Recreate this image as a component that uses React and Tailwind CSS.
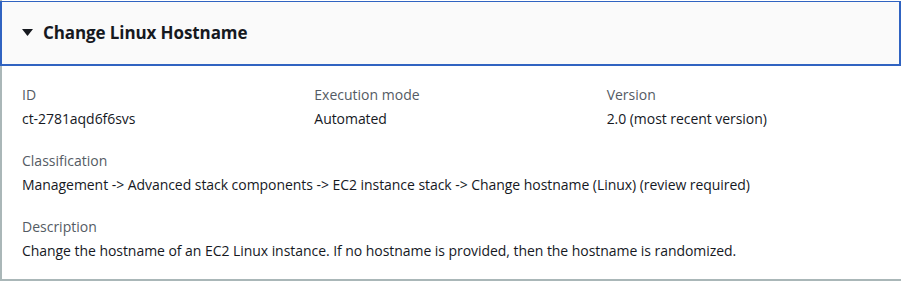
const FONT = "font-['Open_Sans',_'Noto_Sans',_sans-serif]";

const fields = [
  { label: "ID", value: "ct-2781aqd6f6svs" },
  { label: "Execution mode", value: "Automated" },
  { label: "Version", value: "2.0 (most recent version)" },
];

function Field({ label, value }) {
  return (
    <div className="flex flex-col">
      <div className="text-[14px] leading-[22px] text-[#545b64]">{label}</div>
      <div className="text-[14px] leading-[22px] text-[#16191f] mt-[2px] tracking-[-0.05px]">{value}</div>
    </div>
  );
}

export default function App() {
  return (
    <div className={`${FONT} w-[901px] h-[282px] bg-white`}>
      <div className="h-[281px] border-l-2 border-b-2 border-[#aab7b8] flex flex-col">
        {/* Header */}
        <div className="h-[65px] -ml-[2px] mt-[1px] bg-[#fafafa] border-t border-l-2 border-r-2 border-b-2 border-[#3063c1] flex items-center pl-[20px]">
          <svg width="11" height="8" viewBox="0 0 11 8" className="mr-[10px]">
            <polygon points="0,0 11,0 5.5,7" fill="#16191f" />
          </svg>
          <h2 className="text-[17px] font-bold text-[#16191f] tracking-[-0.1px]">Change Linux Hostname</h2>
        </div>

        {/* Body */}
        <div className="pl-[20px] pr-[22px] pt-[18px] flex flex-col gap-[20px]">
          <div className="grid grid-cols-3 gap-5">
            {fields.map((f) => (
              <Field key={f.label} label={f.label} value={f.value} />
            ))}
          </div>
          <Field
            label="Classification"
            value="Management -> Advanced stack components -> EC2 instance stack -> Change hostname (Linux) (review required)"
          />
          <Field
            label="Description"
            value="Change the hostname of an EC2 Linux instance. If no hostname is provided, then the hostname is randomized."
          />
        </div>
      </div>
    </div>
  );
}
